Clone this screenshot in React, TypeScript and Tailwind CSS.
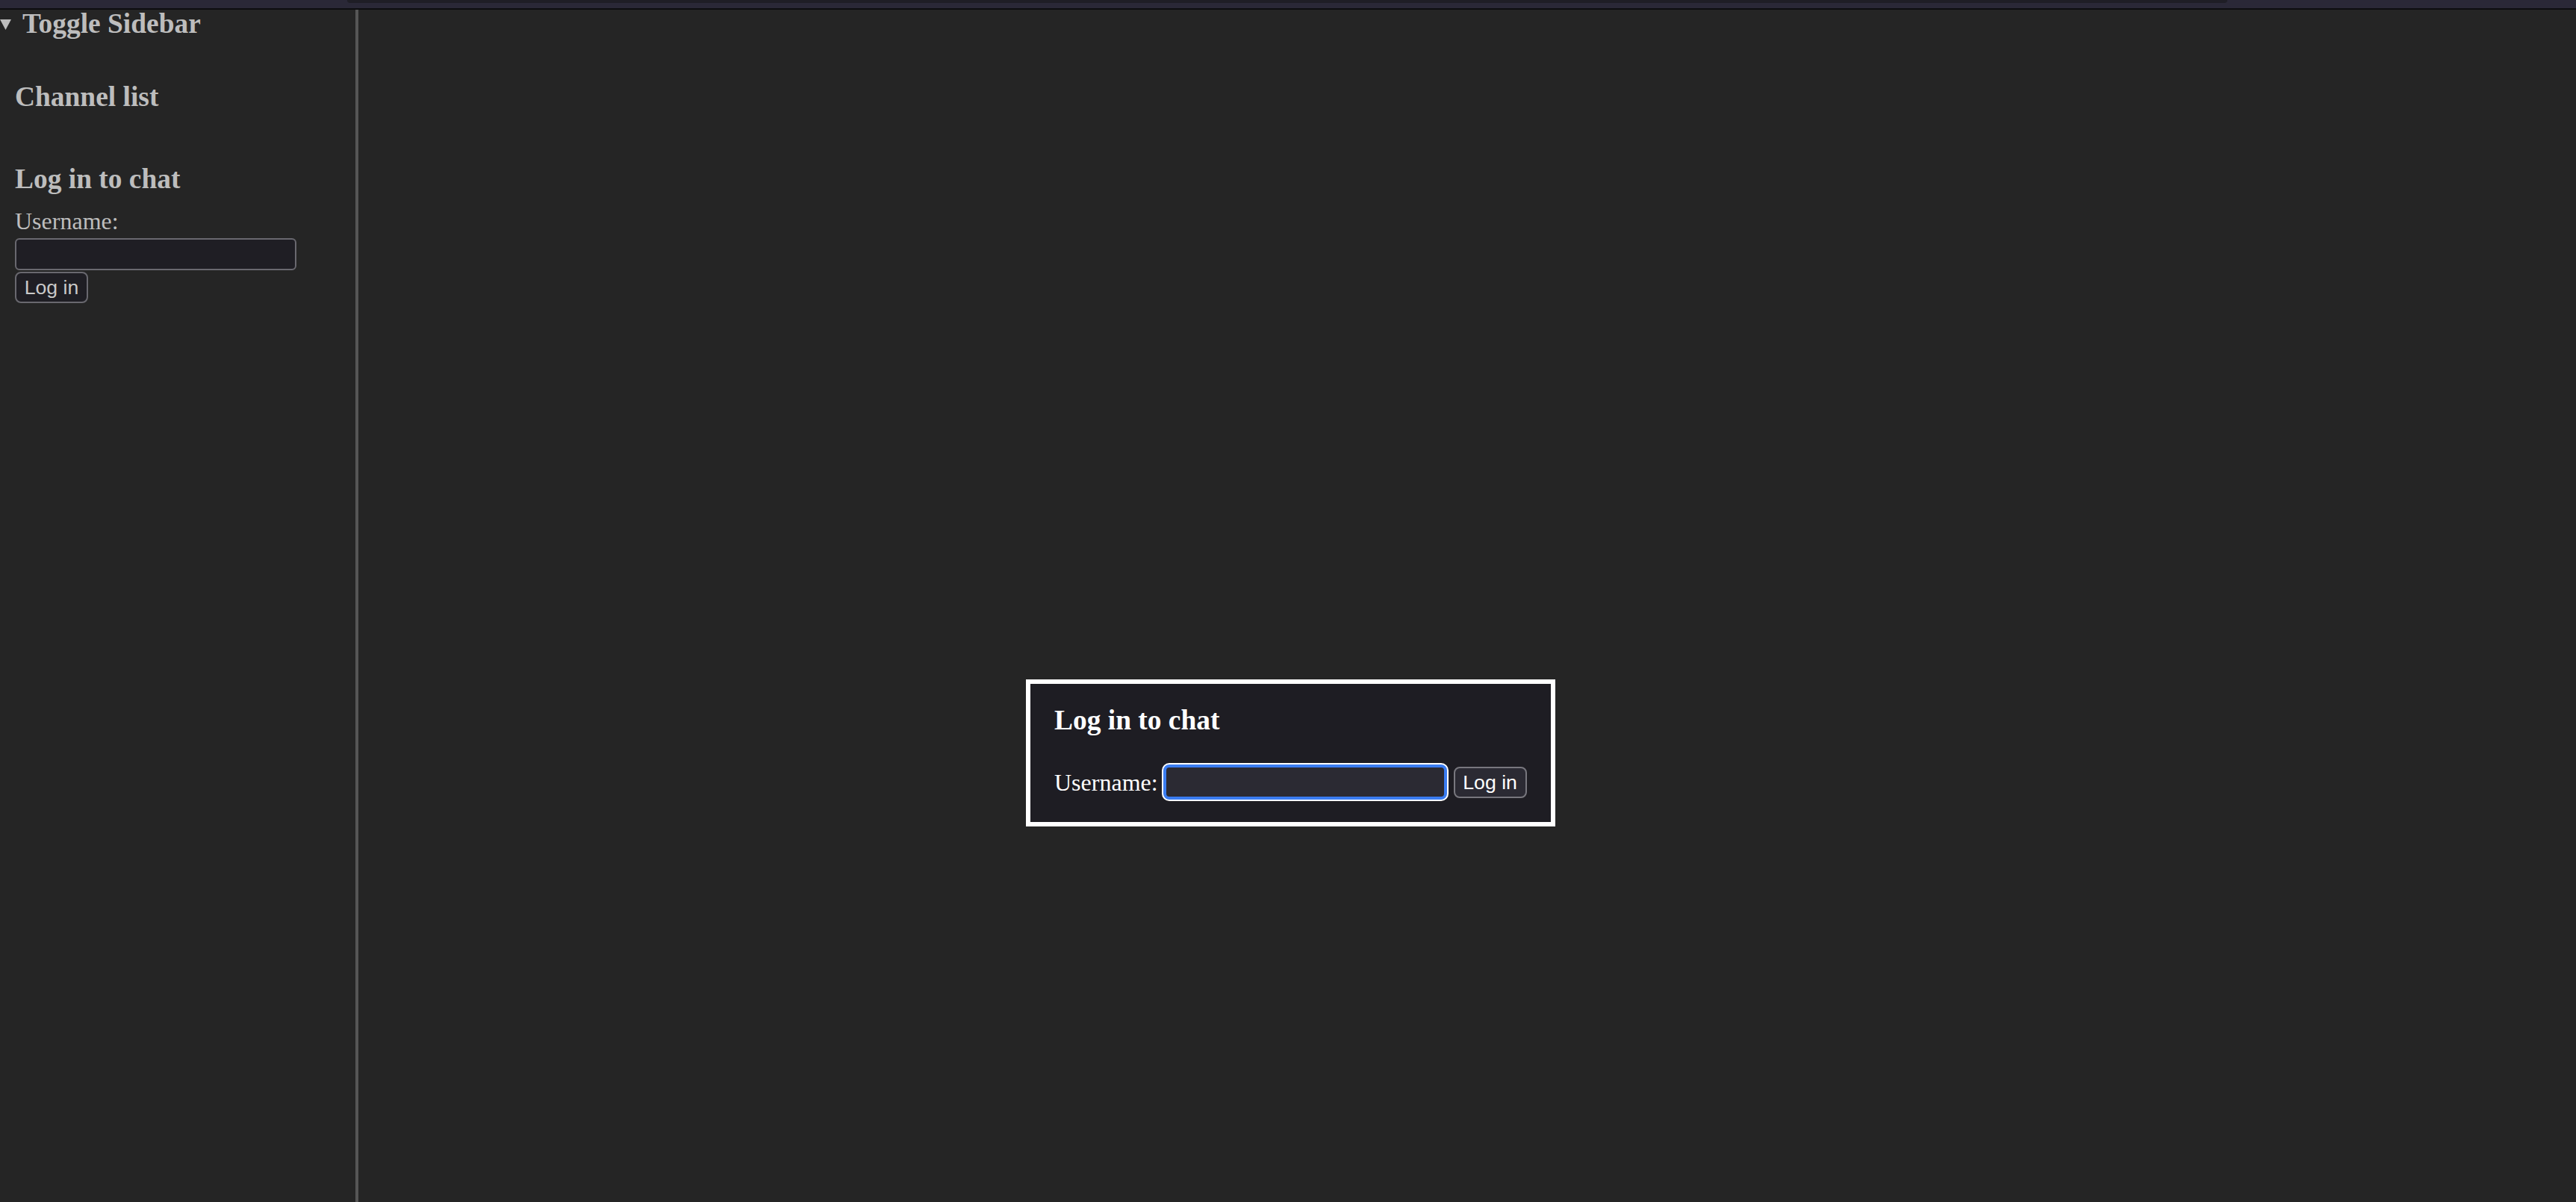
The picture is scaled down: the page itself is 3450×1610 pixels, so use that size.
import React from "react";

const serif = "font-['Liberation_Serif','Times_New_Roman',serif]";
const sans = "font-['Liberation_Sans',Arial,sans-serif]";

function Sidebar() {
	return (
		<aside className={`w-[480px] shrink-0 border-r-4 border-[#565656] text-[#bdbdbd] ${serif}`}>
			<div className="flex items-center h-[37.44px]">
				<svg width="15" height="14" viewBox="0 0 15 14" className="mt-[2px]">
					<polygon points="0,0 15,0 7.5,14" fill="#bdbdbd" />
				</svg>
				<span className="ml-[15px] text-[37.44px] leading-none font-bold">Toggle Sidebar</span>
			</div>
			<div className="pl-[20px]">
				<h3 className="mt-[61px] text-[37.44px] leading-none font-bold">Channel list</h3>
				<h3 className="mt-[72px] text-[37.44px] leading-none font-bold">Log in to chat</h3>
				<div className="mt-[22px] text-[32px] leading-none">Username:</div>
				<input type="text" className="block mt-[7px] w-[377px] h-[43px] bg-[#1f1e24] border-2 border-[#69686f] rounded-[6px] outline-none" />
				<button className={`block mt-[2px] w-[98px] h-[42px] bg-[#1f1e24] border-2 border-[#69686f] rounded-[8px] text-[26.67px] leading-none text-[#c9c9c9] ${sans}`}>
					Log in
				</button>
			</div>
		</aside>
	);
}

function LoginDialog() {
	return (
		<div className={`absolute top-[910px] left-[1374px] border-[6px] border-white bg-[#1e1d23] px-8 pt-[30px] pb-[30px] text-white ${serif}`}>
			<h3 className="text-[37.44px] leading-none font-bold">Log in to chat</h3>
			<div className="flex items-center mt-[41px]">
				<label className="text-[32px] leading-none">Username:</label>
				<input type="text" className="ml-[7px] w-[380px] h-[47px] bg-[#2b2a33] border-4 border-[#3a7cf1] rounded-[8px] shadow-[0_0_0_2px_#ffffff] outline-none" />
				<button className={`ml-[9px] w-[98px] h-[42px] bg-[#2b2a33] border-2 border-[#78777e] rounded-[8px] text-[26.67px] leading-none text-white ${sans}`}>
					Log in
				</button>
			</div>
		</div>
	);
}

export default function App() {
	return (
		<div className="relative w-full h-[1610px] bg-[#252525] flex flex-col overflow-hidden">
			<div className="relative h-[11px] shrink-0 bg-[#2a2837]">
				<div className="absolute left-[465px] top-0 w-[2518px] h-[4px] bg-[#1f1e26] rounded-b-[6px]" />
			</div>
			<div className="h-[2px] shrink-0 bg-[#0d0d10]" />
			<div className="flex flex-1">
				<Sidebar />
				<main className="flex-1" />
			</div>
			<LoginDialog />
		</div>
	);
}
